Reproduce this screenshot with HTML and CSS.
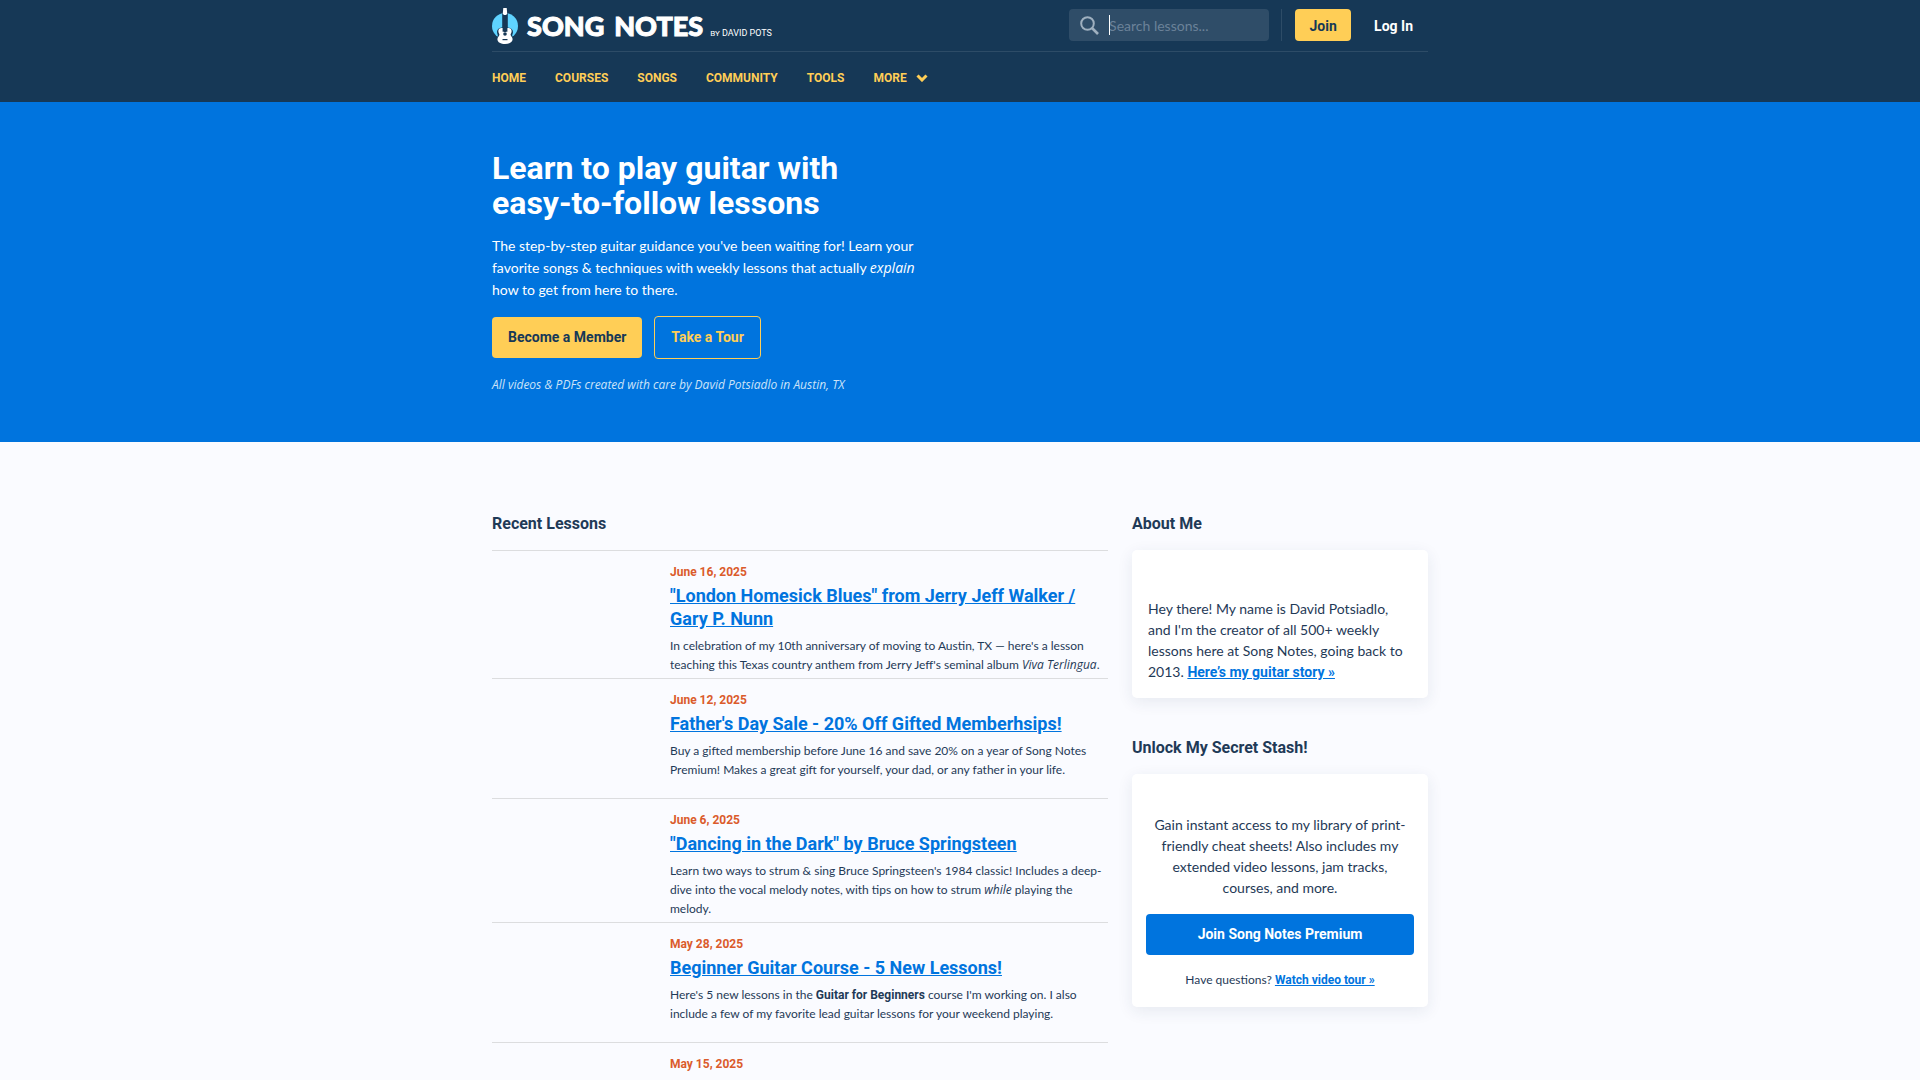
FILE: index.html
```html
<!DOCTYPE html>
<html lang="en">
<head>
<meta charset="utf-8">
<meta name="viewport" content="width=device-width, initial-scale=1">
<title>Song Notes by David Pots</title>
<link rel="stylesheet" href="styles.css">
</head>
<body>
<header class="header">
  <div class="wrap">
    <div class="topbar">
      <a class="logo" href="#">
        <svg class="logo-mark" viewBox="0 0 26 36" width="26" height="36" aria-hidden="true">
          <circle cx="13" cy="18" r="13" fill="#5fd3ff"/>
          <path d="M10.200 4h5.600v15.500c3 .1 5.200 2 5.200 4.500 0 1.600-.8 2.400-.8 3.400 0 1.300 1.800 2.200 1.800 4.600H4c0-2.400 1.800-3.300 1.800-4.600 0-1-.8-1.800-.8-3.400 0-2.500 2.200-4.400 5.200-4.500z" fill="#163856"/>
          <path d="M11.300 0h3.400l.5 5.500-1 1.500h-2.400l-1-1.500z" fill="#fff"/>
          <path d="M10.600 20c-2.700-.5-4.400 1-4.200 3.400.1 1.500 1.100 2.100 1 3.300-.1 1.500-2 2.300-2 4.600C5.400 34.500 9 36 13 36s7.600-1.500 7.600-4.700c0-2.300-1.900-3.100-2-4.600-.1-1.200.9-1.800 1-3.300.2-2.400-1.500-3.900-4.200-3.400v3.800h-4.800z" fill="#fff"/>
          <path d="M12 7h2v17h-2z" fill="#163856"/>
          <circle cx="13" cy="26" r="1.800" fill="#163856"/>
          <path d="M10.500 31h5v1.200h-5z" fill="#163856"/>
        </svg>
        <span class="logo-name"><span>SONG</span> <span>NOTES</span></span>
        <span class="logo-by"><small>BY</small> DAVID POTS</span>
      </a>
      <div class="account">
        <label class="search">
          <svg viewBox="0 0 19 19" width="19" height="19" aria-label="Search" role="img" fill="none" stroke="#9fb0bf" stroke-width="2">
            <circle cx="7.500" cy="7.500" r="6.300"/><path d="M12 12l6 6" stroke-width="2.600"/>
          </svg>
          <span class="caret"></span>
          <input type="search" placeholder="Search lessons...">
        </label>
        <div class="account-actions">
          <a class="join" href="#">Join</a>
          <a class="login" href="#">Log In</a>
        </div>
      </div>
    </div>
    <nav class="nav">
      <a href="#">HOME</a>
      <a href="#">COURSES</a>
      <a href="#">SONGS</a>
      <a href="#">COMMUNITY</a>
      <a href="#">TOOLS</a>
      <button type="button">MORE
        <svg viewBox="0 0 12 8" width="12" height="8" aria-hidden="true" fill="none" stroke="currentColor" stroke-width="3"><path d="M1.500 1.500L6 6l4.500-4.500"/></svg>
      </button>
    </nav>
  </div>
</header>

<section class="hero">
  <div class="wrap">
    <div class="hero-copy">
      <h1>Learn to play guitar with easy-to-follow lessons</h1>
      <p>The step-by-step guitar guidance you've been waiting for! Learn your favorite songs &amp; techniques with weekly lessons that actually <em>explain</em> how to get from here to there.</p>
      <div class="hero-actions">
        <a class="btn btn-solid" href="#">Become a Member</a>
        <a class="btn btn-outline" href="#">Take a Tour</a>
      </div>
      <p class="hero-note">All videos &amp; PDFs created with care by David Potsiadlo in Austin, TX</p>
    </div>
  </div>
</section>

<main class="wrap main">
  <section>
    <h2>Recent Lessons</h2>
    <article class="lesson">
      <div class="thumb"></div>
      <div>
        <time datetime="2025-06-16">June 16, 2025</time>
        <h3><a href="#">"London Homesick Blues" from Jerry Jeff Walker / Gary P. Nunn</a></h3>
        <p>In celebration of my 10th anniversary of moving to Austin, TX — here's a lesson teaching this Texas country anthem from Jerry Jeff's seminal album <em>Viva Terlingua</em>.</p>
      </div>
    </article>
    <article class="lesson">
      <div class="thumb"></div>
      <div>
        <time datetime="2025-06-12">June 12, 2025</time>
        <h3><a href="#">Father's Day Sale - 20% Off Gifted Memberhsips!</a></h3>
        <p>Buy a gifted membership before June 16 and save 20% on a year of Song Notes Premium! Makes a great gift for yourself, your dad, or any father in your life.</p>
      </div>
    </article>
    <article class="lesson">
      <div class="thumb"></div>
      <div>
        <time datetime="2025-06-06">June 6, 2025</time>
        <h3><a href="#">"Dancing in the Dark" by Bruce Springsteen</a></h3>
        <p>Learn two ways to strum &amp; sing Bruce Springsteen's 1984 classic! Includes a deep-dive into the vocal melody notes, with tips on how to strum <em>while</em> playing the melody.</p>
      </div>
    </article>
    <article class="lesson">
      <div class="thumb"></div>
      <div>
        <time datetime="2025-05-28">May 28, 2025</time>
        <h3><a href="#">Beginner Guitar Course - 5 New Lessons!</a></h3>
        <p>Here's 5 new lessons in the <strong>Guitar for Beginners</strong> course I'm working on. I also include a few of my favorite lead guitar lessons for your weekend playing.</p>
      </div>
    </article>
    <article class="lesson">
      <div></div>
      <div>
        <time datetime="2025-05-15">May 15, 2025</time>
      </div>
    </article>
  </section>

  <aside>
    <h2>About Me</h2>
    <div class="card card-about">
      <p>Hey there! My name is David Potsiadlo, and I'm the creator of all 500+ weekly lessons here at Song Notes, going back to 2013. <a href="#">Here’s my guitar story »</a></p>
    </div>
    <h2>Unlock My Secret Stash!</h2>
    <div class="card card-stash">
      <p>Gain instant access to my library of print-friendly cheat sheets! Also includes my extended video lessons, jam tracks, courses, and more.</p>
      <a class="btn btn-blue" href="#">Join Song Notes Premium</a>
      <p class="small">Have questions? <a href="#">Watch video tour »</a></p>
    </div>
  </aside>
</main>
</body>
</html>
```
FILE: styles.css
```css
:root {
  --navy: #163856;
  --blue: #0074de;
  --yellow: #ffce56;
  --ink: #1f3a57;
}

* { box-sizing: border-box; }

body {
  margin: 0;
  background: #fafbff;
  color: var(--ink);
  font: 14px/21px Roboto, "Liberation Sans", sans-serif;
}

h1, h2, h3, p { margin: 0; }
p { font-family: Lato, sans-serif; }
em { font-family: "Open Sans", sans-serif; font-style: italic; line-height: 1; }
strong, p a { font-family: Roboto, sans-serif; font-weight: 700; line-height: 1; }

.wrap { width: 100%; max-width: 936px; margin: 0 auto; }

/* Header */
.header { background: var(--navy); }

.topbar {
  display: flex;
  justify-content: space-between;
  align-items: center;
  height: 52px;
  border-bottom: 1px solid #2d4c67;
}

.logo {
  display: flex;
  align-items: center;
  gap: 7px;
  color: #fff;
  text-decoration: none;
}
.logo-name {
  display: flex;
  gap: 10px;
  padding-left: 2px;
  font: 900 27px/36px Lato, sans-serif;
  -webkit-text-stroke: 1px #fff;
}
.logo-by { font-size: 9px; line-height: 12px; padding-top: 16px; }
.logo-by small { font-size: 8px; }

.account { display: flex; align-items: center; padding-bottom: 1px; }

.search {
  position: relative;
  display: flex;
  align-items: center;
  gap: 20px;
  width: 200px;
  height: 32px;
  padding: 0 11px;
  border-radius: 4px;
  background: #2f4d68;
}
.search svg { flex: none; }
.search input {
  flex: 1;
  min-width: 0;
  margin-left: -10px;
  padding: 0;
  border: 0;
  outline: 0;
  background: none;
  color: #fff;
  font: 14px/21px Lato, sans-serif;
}
.search input::placeholder { color: #6b8299; opacity: 1; }
.caret {
  position: absolute;
  left: 40px;
  top: 6px;
  width: 1px;
  height: 20px;
  background: #fff;
}

.account-actions {
  display: flex;
  align-items: center;
  height: 32px;
  margin-left: 12px;
  padding-left: 13px;
  border-left: 1px solid #2d4c67;
  font-weight: 700;
  line-height: 32px;
}
.account-actions a { text-decoration: none; }
.join {
  min-width: 56px;
  height: 32px;
  padding-top: 1px;
  border-radius: 4px;
  background: var(--yellow);
  color: var(--navy);
  text-align: center;
}
.login { padding: 1px 15px 0 23px; color: #fff; }

.nav {
  display: flex;
  align-items: center;
  gap: 29px;
  height: 50px;
  padding-top: 2px;
}
.nav a, .nav button {
  padding: 0;
  border: 0;
  background: none;
  color: var(--yellow);
  font: 700 12px/18px Roboto, sans-serif;
  text-decoration: none;
}
.nav button { display: flex; align-items: center; gap: 9px; }

/* Hero */
.hero { background: var(--blue); color: #fff; padding: 49px 0 46px; }
.hero-copy { max-width: 432px; }
.hero h1 { font-size: 32px; line-height: 35px; font-weight: 700; }
.hero p { margin-top: 14px; line-height: 22px; }
.hero-actions { display: flex; align-items: center; gap: 12px; margin-top: 15px; }

.btn {
  display: block;
  padding: 10px 16px;
  border-radius: 4px;
  font-weight: 700;
  text-align: center;
  text-decoration: none;
}
.btn-solid { background: var(--yellow); color: var(--navy); }
.btn-outline { border: 1px solid var(--yellow); color: var(--yellow); }
.btn-blue { background: var(--blue); color: #fff; }

.hero .hero-note {
  margin-top: 15px;
  color: #cce3f8;
  font: italic 12px/22px "Open Sans", sans-serif;
}

/* Main columns */
.main {
  display: grid;
  grid-template-columns: minmax(0, 1fr) 296px;
  gap: 24px;
  padding-top: 71px;
}
h2 { margin-bottom: 15px; font-size: 16px; line-height: 22px; font-weight: 700; }

.lesson {
  display: grid;
  grid-template-columns: 160px minmax(0, 1fr);
  gap: 18px;
  padding: 12px 0 4px;
  border-top: 1px solid #dcdddf;
}
.thumb { height: 103px; }
.lesson time {
  display: block;
  color: #db5b2c;
  font-size: 12px;
  line-height: 18px;
  font-weight: 700;
}
.lesson h3 { margin: 3px 0 6px; font-size: 18px; line-height: 23px; font-weight: 700; }
.lesson p { font-size: 12px; line-height: 19px; }

.lesson a, .card p a { color: var(--blue); text-decoration: underline; }

/* Sidebar cards */
.card {
  border-radius: 5px;
  background: #fff;
  box-shadow: 0 4px 16px rgba(31, 58, 87, 0.09);
}
.card + h2 { margin-top: 39px; }
.card-about { padding: 48px 16px 16px; }
.card-stash { padding: 40px 14px 17px; text-align: center; }
.card-stash .btn { margin: 16px 0 15px; }
.card-stash .small { font-size: 12px; line-height: 20px; }
```
